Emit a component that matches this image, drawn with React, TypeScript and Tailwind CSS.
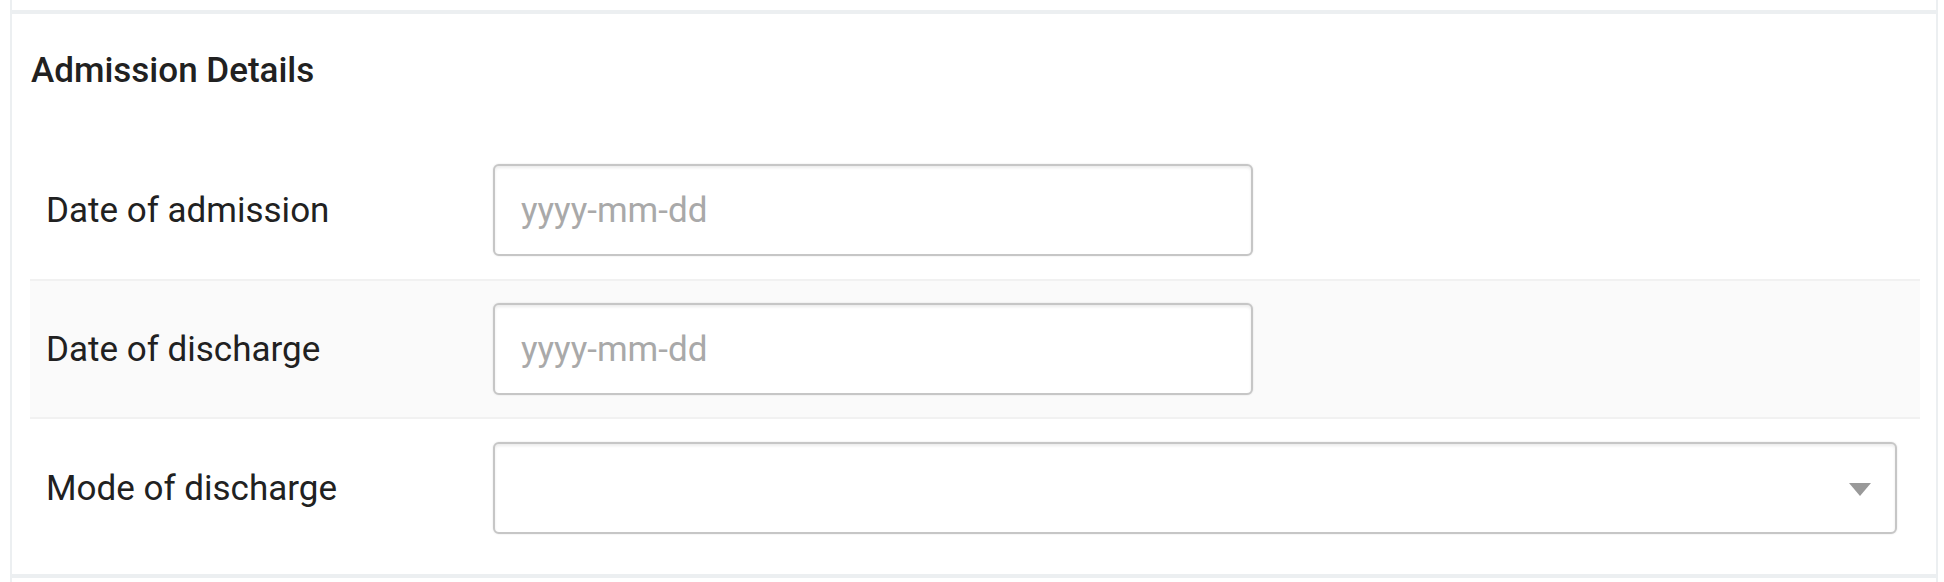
import React from "react";

const font = "font-['Roboto','Liberation_Sans',sans-serif]";

function DateField({ label, striped }: { label: string; striped?: boolean }) {
    return (
        <div className={`flex items-center ${striped ? "bg-[#fafafa] border-y-2 border-[#f1f1f1] h-[140px]" : "h-[138px]"}`}>
            <label className="w-[463px] pl-[16px] text-[35px] leading-[41px] text-[#212121]">{label}</label>
            <input
                type="text"
                placeholder="yyyy-mm-dd"
                className="w-[760px] h-[92px] px-[26px] bg-white border-2 border-[#c6c6c6] rounded-[6px] shadow-[inset_0_2px_3px_rgba(0,0,0,0.08),0_0_2px_rgba(0,0,0,0.12)] text-[35px] text-[#212121] placeholder:text-[#a9a9a9] outline-none"
            />
        </div>
    );
}

export default function App() {
    return (
        <div className={`w-[1944px] h-[582px] bg-white overflow-hidden ${font}`}>
            <div className="ml-[10px] w-[1928px] h-full border-x-2 border-[#eceff1] flex flex-col">
                <div className="h-[10px] shrink-0"></div>
                <section className="border-y-4 border-[#eceff1] pt-[36px] pl-[18px] pr-[16px] pb-[17px]">
                    <h2 className="pl-[1px] text-[35px] leading-[41px] font-medium text-[#212121]">Admission Details</h2>
                    <div className="mt-[50px] flex flex-col">
                        <DateField label="Date of admission" />
                        <DateField label="Date of discharge" striped />
                        <div className="flex items-center h-[138px] pr-[23px]">
                            <label className="w-[463px] shrink-0 pl-[16px] text-[35px] leading-[41px] text-[#212121]">Mode of discharge</label>
                            <button
                                type="button"
                                className="flex-1 h-[92px] flex items-center justify-end pr-[24px] bg-white border-2 border-[#c6c6c6] rounded-[6px] shadow-[inset_0_2px_3px_rgba(0,0,0,0.08),0_0_2px_rgba(0,0,0,0.12)]"
                            >
                                <svg width="22" height="13" viewBox="0 0 22 13" className="mt-[3px]">
                                    <polygon points="0,0 22,0 11,13" fill="#999999" />
                                </svg>
                            </button>
                        </div>
                    </div>
                </section>
            </div>
        </div>
    );
}
